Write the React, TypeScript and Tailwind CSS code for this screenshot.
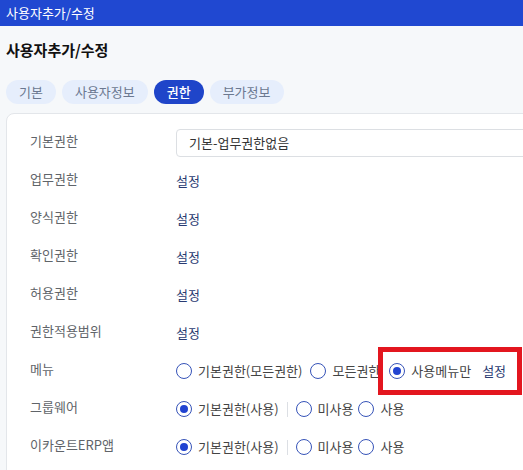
import React from 'react';

const FONT = { fontFamily: '"Noto Sans CJK KR", "Noto Sans", sans-serif' };

// ── Radio ───────────────────────────────────────────────────────────────────
const Radio = ({ label, checked = false }: { label: string; checked?: boolean }) => (
  <label className="flex items-center gap-[6px] cursor-pointer">
    <span className="w-4 h-4 rounded-full border-[1.5px] border-[#3653b8] bg-white flex items-center justify-center shrink-0">
      {checked && <span className="w-[8px] h-[8px] rounded-full bg-[#2143d1]" />}
    </span>
    <span className="text-[13px] text-[#444] whitespace-nowrap">{label}</span>
  </label>
);

const Sep = () => <span className="w-px h-[15px] bg-[#dcdfe4] mx-[3px]" />;

const SetLink = () => <button type="button" className="text-[13px] text-[#2a3b72]">설정</button>;

// ── Row ─────────────────────────────────────────────────────────────────────
const Row = ({ label, children }: { label: string; children: React.ReactNode }) => (
  <div className="flex items-center h-[38px]">
    <div className="w-[146px] shrink-0 pb-[5px] text-[13px] text-[#606469]">{label}</div>
    <div className="flex items-center flex-1 min-w-0">{children}</div>
  </div>
);

const tabs = ['기본', '사용자정보', '권한', '부가정보'];

export default function App() {
  return (
    <div className="w-[523px] h-[470px] overflow-hidden bg-[#f6f8fa]" style={FONT}>
      {/* 상단 바 */}
      <div className="h-[26px] bg-[#2048d1] flex items-center px-[6px]">
        <span className="text-[13px] text-white">사용자추가/수정</span>
      </div>

      <div className="px-[6px]">
        <h1 className="mt-[14px] h-[20px] leading-[20px] text-[15px] font-bold text-[#111]">사용자추가/수정</h1>

        {/* 탭 */}
        <div className="mt-[20px] flex gap-[6px]">
          {tabs.map((t) => (
            <button
              key={t}
              type="button"
              className={`h-[24px] px-[13px] rounded-full text-[13px] ${
                t === '권한' ? 'bg-[#1f45c9] text-white font-medium' : 'bg-[#e6eefc] text-[#6b7890]'
              }`}
            >
              {t}
            </button>
          ))}
        </div>

        {/* 권한 카드 */}
        <div className="mt-[9px] w-[600px] h-[420px] bg-white border border-[#e3e6ea] rounded-lg pt-[10px] pl-[23px] relative">
          <Row label="기본권한">
            <div className="h-[28px] w-[400px] border border-[#dcdfe3] rounded-[4px] flex items-center px-3 text-[13px] text-[#333]">
              기본-업무권한없음
            </div>
          </Row>
          <Row label="업무권한"><SetLink /></Row>
          <Row label="양식권한"><SetLink /></Row>
          <Row label="확인권한"><SetLink /></Row>
          <Row label="허용권한"><SetLink /></Row>
          <Row label="권한적용범위"><SetLink /></Row>
          <Row label="메뉴">
            <div className="flex items-center gap-[8px]">
              <Radio label="기본권한(모든권한)" />
              <Radio label="모든권한" />
              <div className="flex items-center gap-[11px] ml-[1px]">
                <Radio label="사용메뉴만" checked />
                <SetLink />
              </div>
            </div>
          </Row>
          <Row label="그룹웨어">
            <div className="flex items-center gap-[5px]">
              <Radio label="기본권한(사용)" checked />
              <Sep />
              <Radio label="미사용" />
              <Radio label="사용" />
            </div>
          </Row>
          <Row label="이카운트ERP앱">
            <div className="flex items-center gap-[5px]">
              <Radio label="기본권한(사용)" checked />
              <Sep />
              <Radio label="미사용" />
              <Radio label="사용" />
            </div>
          </Row>

          {/* 강조 표시 */}
          <div className="absolute left-[371px] top-[233px] w-[144px] h-[48px] border-[5px] border-[#e3161f] pointer-events-none" />
        </div>
      </div>
    </div>
  );
}
